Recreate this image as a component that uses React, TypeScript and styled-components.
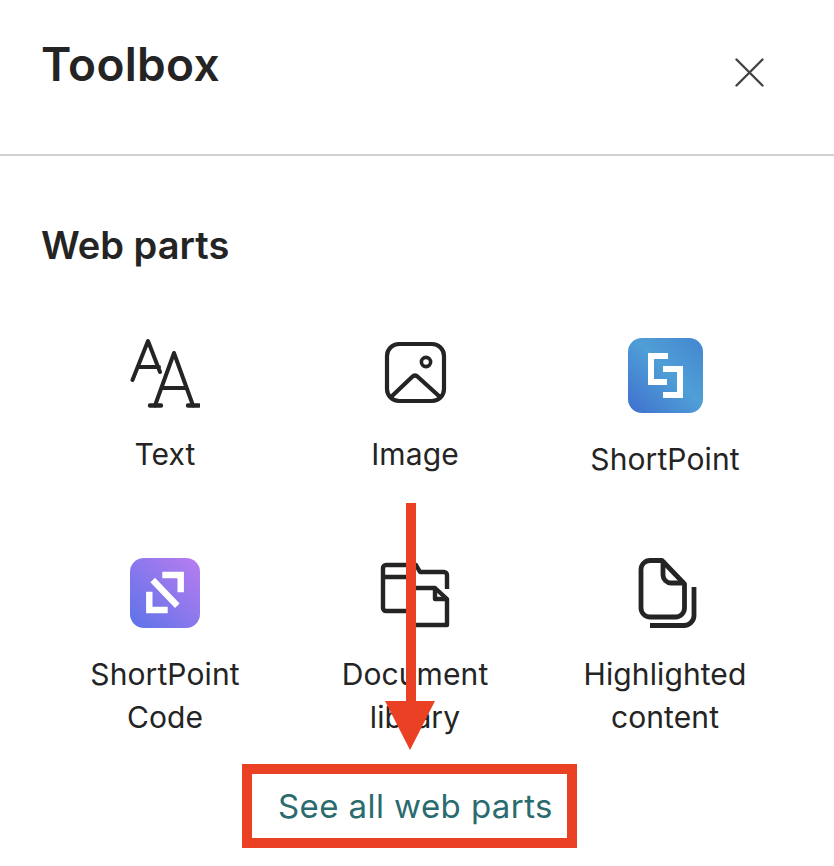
import React from "react";
import styled, { createGlobalStyle } from "styled-components";

const GlobalStyle = createGlobalStyle`
  html, body {
    margin: 0;
    padding: 0;
    background: #ffffff;
  }
  body {
    font-family: Inter, "Liberation Sans", sans-serif;
    color: #242424;
  }
`;

const Page = styled.div`
  position: relative;
  width: 834px;
  height: 866px;
  overflow: hidden;
`;

const Header = styled.header`
  height: 156px;
  box-sizing: border-box;
  border-bottom: 2px solid #d1d1d1;
  display: flex;
  justify-content: space-between;
  align-items: flex-start;
  padding: 36px 70px 0 41px;
`;

const Title = styled.h1`
  margin: 0;
  font-size: 46px;
  line-height: 56px;
  font-weight: 600;
  letter-spacing: 0.3px;
`;

const CloseButton = styled.button`
  border: none;
  background: none;
  padding: 0;
  margin-top: 22px;
  width: 29px;
  height: 29px;
  display: flex;
  cursor: pointer;
`;

const Section = styled.section`
  padding: 64px 44px 0 40px;
`;

const SectionTitle = styled.h2`
  margin: 0 0 68px 1px;
  font-size: 38px;
  line-height: 50px;
  font-weight: 600;
`;

const PartGrid = styled.div`
  display: grid;
  grid-template-columns: repeat(3, 250px);
  row-gap: 77px;
`;

const Part = styled.div`
  display: flex;
  flex-direction: column;
  align-items: center;
  gap: 25px;
  min-height: 143px;
`;

const PartIcon = styled.svg<{ $size?: number }>`
  display: block;
  width: ${(p) => p.$size ?? 70}px;
  height: ${(p) => p.$size ?? 70}px;
`;

const PartLabel = styled.span`
  width: 190px;
  text-align: center;
  font-size: 30px;
  line-height: 43px;
  letter-spacing: 0.1px;
`;

const Footer = styled.div`
  display: flex;
  margin: 25px 0 0 202px;
`;

const SeeAllLink = styled.a`
  box-sizing: border-box;
  width: 335px;
  height: 84px;
  border: 10px solid #ea4125;
  padding-left: 26px;
  display: flex;
  align-items: center;
  color: #2a6b6f;
  font-size: 33px;
  letter-spacing: 0.42px;
  text-decoration: none;
  cursor: pointer;
`;

const ArrowOverlay = styled.svg`
  position: absolute;
  left: 380px;
  top: 500px;
  width: 60px;
  height: 255px;
`;

const TextIcon = () => (
  <PartIcon viewBox="0 0 70 70" fill="none" stroke="#242424" strokeWidth="4" strokeLinecap="round" strokeLinejoin="round">
    <path d="M2.5 42 L18 3 L30 34 M8 29 H29" />
    <path d="M25 67.5 L44 15 L63 67.5 M32 50 H56" />
    <path d="M20 67.5 H31 M58 67.5 H69" strokeWidth="4.4" />
  </PartIcon>
);

const ImageIcon = () => (
  <PartIcon viewBox="0 0 70 70" fill="none" stroke="#242424" strokeWidth="4.2" strokeLinejoin="round" strokeLinecap="round">
    <rect x="7" y="6" width="57" height="57" rx="12" />
    <circle cx="46" cy="24" r="4.6" strokeWidth="3.6" />
    <path d="M11 59 L32 39 Q35 36 38 39 L60 59" />
  </PartIcon>
);

const ShortPointIcon = () => (
  <PartIcon $size={75} viewBox="0 0 75 75">
    <defs>
      <linearGradient id="sp-blue" x1="0" y1="1" x2="1" y2="0">
        <stop offset="0" stopColor="#3f70cf" />
        <stop offset="0.55" stopColor="#4f9fd6" />
        <stop offset="1" stopColor="#4486d0" />
      </linearGradient>
    </defs>
    <rect width="75" height="75" rx="14" fill="url(#sp-blue)" />
    <g fill="none" stroke="#ffffff" strokeWidth="6">
      <path d="M40 18 H23 V44 H39" />
      <path d="M35 31 H52 V57 H35" />
    </g>
  </PartIcon>
);

const ShortPointCodeIcon = () => (
  <PartIcon viewBox="0 0 70 70">
    <defs>
      <linearGradient id="sp-purple" x1="0" y1="1" x2="1" y2="0">
        <stop offset="0" stopColor="#5c73e8" />
        <stop offset="1" stopColor="#b97df0" />
      </linearGradient>
    </defs>
    <rect width="70" height="70" rx="14" fill="url(#sp-purple)" />
    <g fill="none" stroke="#ffffff" strokeWidth="6.4">
      <path d="M32.3 17 H50.7 V34.3" />
      <path d="M19.3 33.7 V52 H37.7" />
      <path d="M22.7 22 L47.3 47.7" />
    </g>
  </PartIcon>
);

const DocumentLibraryIcon = () => (
  <PartIcon viewBox="0 0 70 70" fill="none" stroke="#242424" strokeWidth="4.4" strokeLinejoin="round">
    <path d="M30 53 H6 a3 3 0 0 1 -3 -3 V10 a3 3 0 0 1 3 -3 H36 L40 14 H64 a3 3 0 0 1 3 3 V31" />
    <path d="M3 19 H36" />
    <path d="M30 30 H55 L67 41 V67 H30" />
    <path d="M55 30 V41 H67" />
  </PartIcon>
);

const HighlightedIcon = () => (
  <PartIcon viewBox="0 0 70 70" fill="none" stroke="#242424" strokeWidth="4.8" strokeLinejoin="round">
    <path d="M20 2.5 H32 L54.5 26 V50 a9 9 0 0 1 -9 9 H20 a9 9 0 0 1 -9 -9 V11.5 a9 9 0 0 1 9 -9 Z" />
    <path d="M33 2.5 V17 a8 8 0 0 0 8 8 H54.5" />
    <path d="M20 67.5 H54 a10 10 0 0 0 10 -10 V29" />
  </PartIcon>
);

const parts = [
  { label: "Text", icon: <TextIcon /> },
  { label: "Image", icon: <ImageIcon /> },
  { label: "ShortPoint", icon: <ShortPointIcon /> },
  { label: "ShortPoint Code", icon: <ShortPointCodeIcon /> },
  { label: "Document library", icon: <DocumentLibraryIcon /> },
  { label: "Highlighted content", icon: <HighlightedIcon /> },
];

export default function App(): React.ReactElement {
  return (
    <Page>
      <GlobalStyle />
      <Header>
        <Title>Toolbox</Title>
        <CloseButton aria-label="Close">
          <svg width="29" height="29" viewBox="0 0 29 29" fill="none" stroke="#444444" strokeWidth="2.4" strokeLinecap="round">
            <path d="M1.5 1.5 L27.5 27.5 M27.5 1.5 L1.5 27.5" />
          </svg>
        </CloseButton>
      </Header>
      <Section>
        <SectionTitle>Web parts</SectionTitle>
        <PartGrid>
          {parts.map((part) => (
            <Part key={part.label}>
              {part.icon}
              <PartLabel>{part.label}</PartLabel>
            </Part>
          ))}
        </PartGrid>
        <Footer>
          <SeeAllLink>See all web parts</SeeAllLink>
        </Footer>
      </Section>
      <ArrowOverlay viewBox="0 0 60 255">
        <path d="M26 3 H36 V201 H55 L30 250 L5 201 H26 Z" fill="#ea4125" />
      </ArrowOverlay>
    </Page>
  );
}
